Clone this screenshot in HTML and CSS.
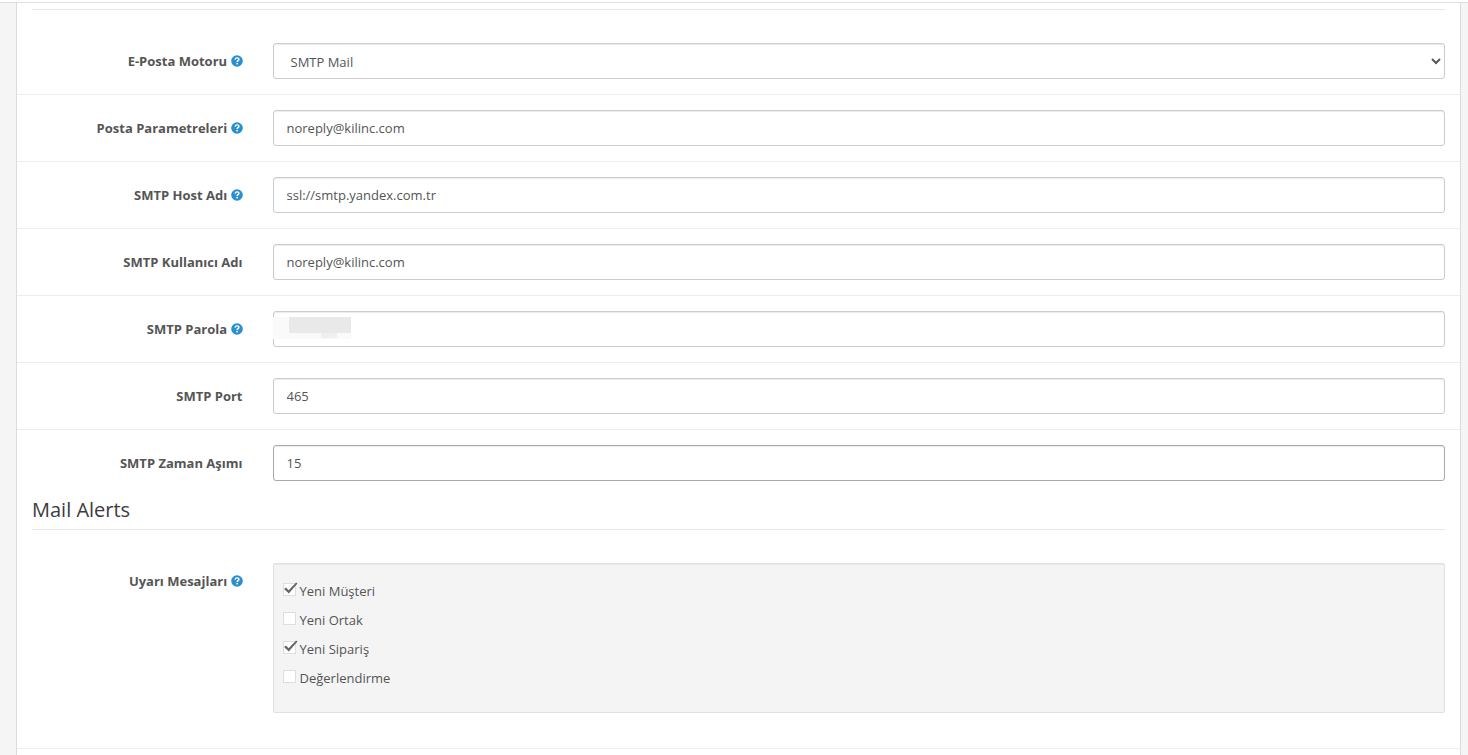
FILE: index.html
```
<!DOCTYPE html>
<html lang="tr">
<head>
    <meta charset="UTF-8">
    <meta name="viewport" content="width=device-width, initial-scale=1.0">
    <title>Ayarlar</title>

    <link rel="stylesheet" href="styles.css">
</head>
<body>
    <svg class="sprite" aria-hidden="true">
        <symbol id="icon-help" viewBox="0 0 12 12">
            <circle cx="6" cy="6" r="5.8" fill="#2a8fce"/>
            <path d="M4.1 4.6C4.3 3.4 5 2.9 6 2.9c1.1 0 1.9.6 1.9 1.6C7.9 5.7 6.1 5.7 6.1 7.1" fill="none" stroke="#fff" stroke-width="1.4"/>
            <rect x="5.3" y="7.9" width="1.6" height="1.5" fill="#fff"/>
        </symbol>
    </svg>

    <header class="topbar"></header>

    <main class="container">
        <form class="panel">
            <hr class="legend-line">

            <div class="form-group">
                <label class="control-label" for="engine">E-Posta Motoru <svg class="help"><use href="#icon-help"/></svg></label>
                <div class="field">
                    <select class="form-control" id="engine">
                        <option>Mail</option>
                        <option selected>SMTP Mail</option>
                    </select>
                </div>
            </div>
            <div class="form-group">
                <label class="control-label" for="parameter">Posta Parametreleri <svg class="help"><use href="#icon-help"/></svg></label>
                <div class="field">
                    <input type="text" class="form-control" id="parameter" value="noreply@kilinc.com">
                </div>
            </div>
            <div class="form-group">
                <label class="control-label" for="hostname">SMTP Host Adı <svg class="help"><use href="#icon-help"/></svg></label>
                <div class="field">
                    <input type="text" class="form-control" id="hostname" value="ssl://smtp.yandex.com.tr">
                </div>
            </div>
            <div class="form-group">
                <label class="control-label" for="username">SMTP Kullanıcı Adı</label>
                <div class="field">
                    <input type="text" class="form-control" id="username" value="noreply@kilinc.com">
                </div>
            </div>
            <div class="form-group">
                <label class="control-label" for="password">SMTP Parola <svg class="help"><use href="#icon-help"/></svg></label>
                <div class="field">
                    <input type="text" class="form-control" id="password">
                    <span class="mask"></span>
                </div>
            </div>
            <div class="form-group">
                <label class="control-label" for="port">SMTP Port</label>
                <div class="field">
                    <input type="text" class="form-control" id="port" value="465">
                </div>
            </div>
            <div class="form-group">
                <label class="control-label" for="timeout">SMTP Zaman Aşımı</label>
                <div class="field">
                    <input type="text" class="form-control form-control-active" id="timeout" value="15">
                </div>
            </div>

            <h2 class="legend">Mail Alerts</h2>

            <div class="form-group">
                <span class="control-label" id="alerts">Uyarı Mesajları <svg class="help"><use href="#icon-help"/></svg></span>
                <div class="field">
                    <div class="well" role="group" aria-labelledby="alerts">
                        <label class="checkbox"><input type="checkbox" checked>Yeni Müşteri</label>
                        <label class="checkbox"><input type="checkbox">Yeni Ortak</label>
                        <label class="checkbox"><input type="checkbox" checked>Yeni Sipariş</label>
                        <label class="checkbox"><input type="checkbox">Değerlendirme</label>
                    </div>
                </div>
            </div>
            <div class="form-group"></div>
        </form>
    </main>
</body>
</html>
```
FILE: styles.css
```
* {
    box-sizing: border-box;
}

body {
    margin: 0;
    background: #f5f5f5;
    color: #555;
    font-family: "Open Sans", "Liberation Sans", sans-serif;
    font-size: 13px;
    line-height: 19px;
}

.sprite {
    display: none;
}

.topbar {
    height: 3px;
    background: #fff;
    border-bottom: 1px solid #dfdfdf;
}

.container {
    padding: 0 7px 0 16px;
}

.panel {
    padding: 6px 15px 0;
    background: #fff;
    border: solid #dcdcdc;
    border-width: 0 1px;
}

.legend-line {
    height: 1px;
    margin: 0 0 18px;
    border: 0;
    background: #e5e5e5;
}

.legend {
    margin: 0 0 18px;
    padding-bottom: 5px;
    border-bottom: 1px solid #e5e5e5;
    color: #3c3c3c;
    font-size: 20px;
    font-weight: 400;
    line-height: 28px;
}

/* rows */
.form-group {
    display: grid;
    grid-template-columns: 2fr 10fr;
    margin: 0 -15px;
    padding: 15px 0;
}

.form-group + .form-group {
    border-top: 1px solid #ededed;
}

.control-label {
    padding: 9px 15px 0;
    font-weight: 700;
    text-align: right;
}

.help {
    width: 12px;
    height: 12px;
    vertical-align: -1px;
}

.field {
    position: relative;
    padding: 0 15px;
}

.form-control {
    display: block;
    width: 100%;
    height: 36px;
    padding: 8px 13px;
    background: #fff;
    border: 1px solid #ccc;
    border-radius: 3px;
    box-shadow: inset 0 1px 1px rgba(0, 0, 0, 0.08);
    color: #555;
    font: inherit;
}

.form-control-active {
    border-color: #aaa;
}

/* hidden password */
.mask {
    position: absolute;
    top: 6px;
    left: 15px;
    width: 78px;
    height: 22px;
    background: linear-gradient(#e9e9e9, #e9e9e9) 16px 0 / 62px 16px no-repeat,
                linear-gradient(#efefef, #efefef) 48px 16px / 16px 5px no-repeat,
                #fafafa;
    pointer-events: none;
}

.well {
    display: flex;
    flex-direction: column;
    align-items: flex-start;
    gap: 10px;
    height: 150px;
    margin-bottom: 20px;
    padding: 18px 9px;
    overflow: auto;
    background: #f4f4f4;
    border: 1px solid #e0e0e0;
    border-radius: 2px;
    box-shadow: inset 0 1px 1px rgba(0, 0, 0, 0.05);
}

.checkbox {
    display: flex;
    gap: 4px;
}

.checkbox input {
    appearance: none;
    position: relative;
    width: 13px;
    height: 13px;
    margin: 1px 0 0;
    background: #fff;
    border: 1px solid #dedede;
}

.checkbox input:checked::before {
    content: "";
    position: absolute;
    top: -2px;
    left: 0;
    width: 14px;
    height: 12px;
    background: #666;
    clip-path: polygon(4% 58%, 18% 46%, 36% 68%, 90% 4%, 100% 12%, 38% 96%);
}
```
